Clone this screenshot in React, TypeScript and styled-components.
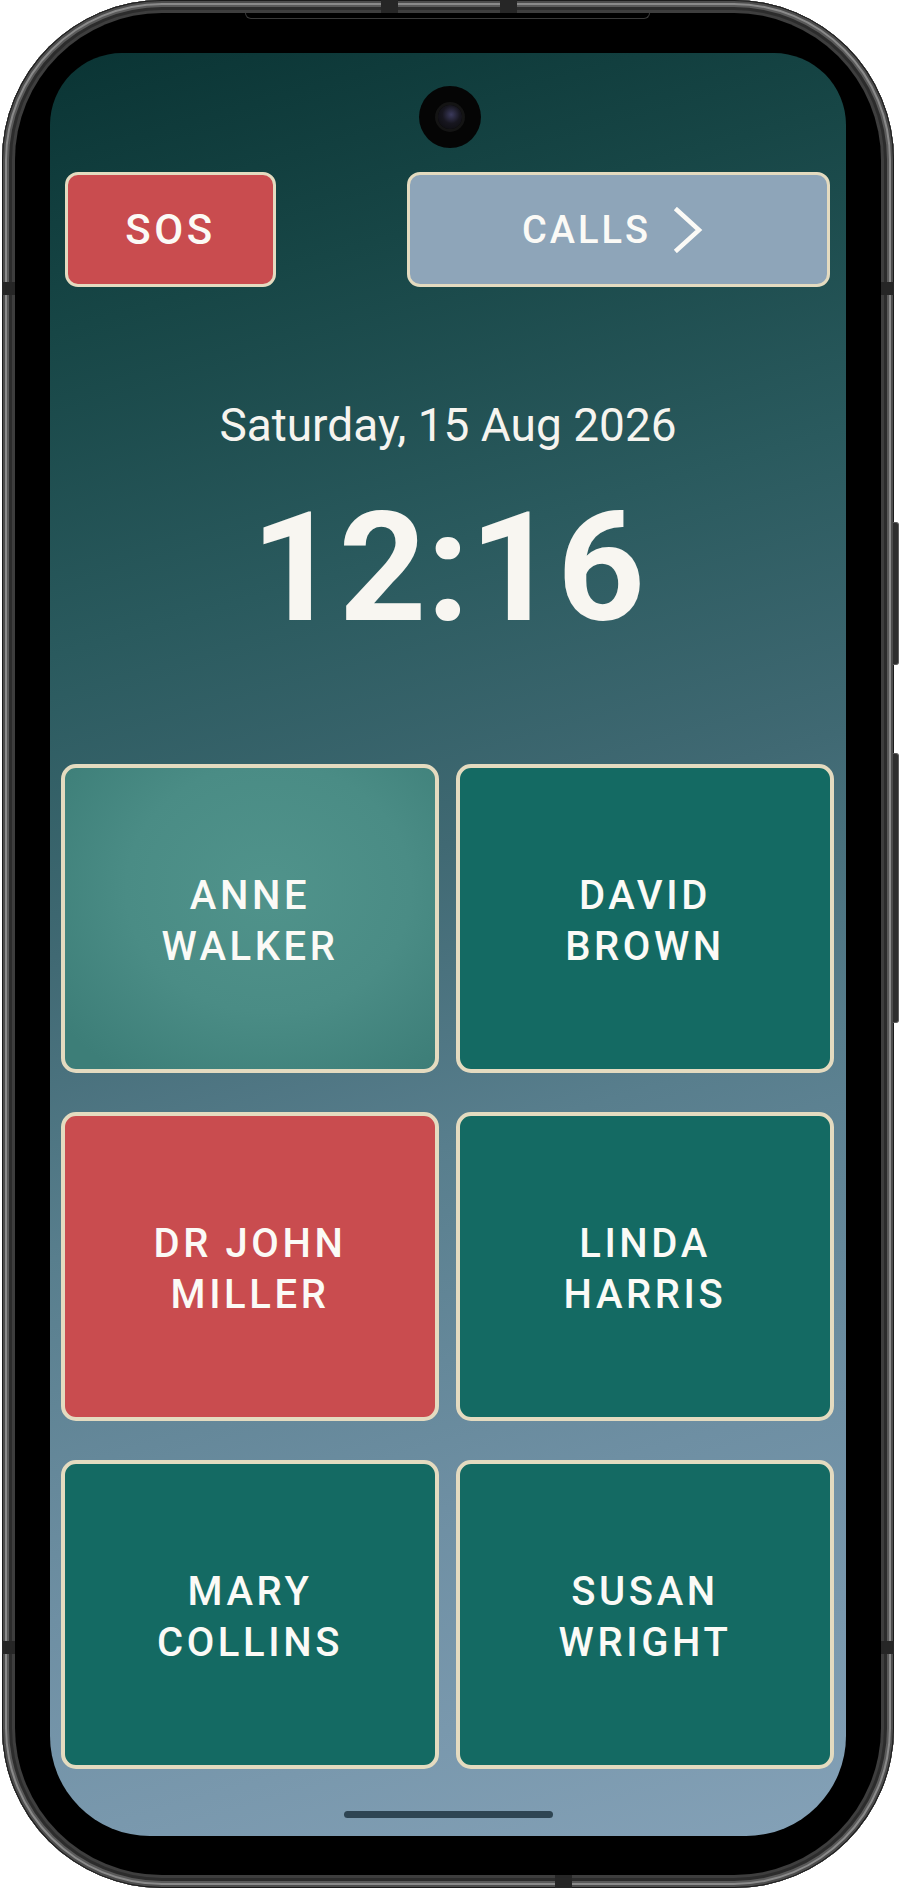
import React from "react";
import styled, { createGlobalStyle } from "styled-components";

const Global = createGlobalStyle`
  html, body { margin: 0; padding: 0; background: #ffffff; }
  body { font-family: Roboto, "Noto Sans", "Liberation Sans", sans-serif; }
  * { box-sizing: border-box; }
`;

const Stage = styled.div`
  width: 900px;
  height: 1890px;
  overflow: hidden;
  background: #ffffff;
`;

const Phone = styled.div`
  position: relative;
  margin-left: 2px;
  width: 892px;
  height: 1888px;
  padding: 13px;
  border-radius: 160px;
  background: #3a3a3a;
  box-shadow:
    inset 0 0 0 1px #1c1c1c,
    inset 0 0 0 3px #4c4c4c,
    inset 0 0 0 5px #8a8a8a,
    inset 0 0 0 7px #5a5a5a,
    inset 0 0 0 10px #2c2c2c,
    inset 0 0 0 13px #3e3e3e;
`;

const SideButton = styled.div<{ $top: number; $h: number }>`
  position: absolute;
  right: -5px;
  top: ${(p) => p.$top}px;
  width: 6px;
  height: ${(p) => p.$h}px;
  border-radius: 0 3px 3px 0;
  background: #2e2e2e;
  border: 1px solid #5c5c5c;
  border-left: none;
`;

const BandV = styled.div<{ $left: number; $bottom?: boolean }>`
  position: absolute;
  left: ${(p) => p.$left}px;
  ${(p) => (p.$bottom ? "bottom: 0;" : "top: 0;")}
  width: 17px;
  height: 13px;
  background: #262626;
`;

const BandH = styled.div<{ $top: number; $right?: boolean }>`
  position: absolute;
  top: ${(p) => p.$top}px;
  ${(p) => (p.$right ? "right: 0;" : "left: 0;")}
  width: 13px;
  height: 13px;
  background: #262626;
`;

const Bezel = styled.div`
  position: relative;
  width: 100%;
  height: 100%;
  padding: 40px 35px 39px 35px;
  border-radius: 147px;
  background: #000000;
`;

const Speaker = styled.div`
  position: absolute;
  top: 0;
  left: 230px;
  width: 405px;
  height: 6px;
  border: 1px solid #3a3a3a;
  border-top: none;
  border-radius: 0 0 8px 8px;
`;

const Screen = styled.div`
  position: relative;
  width: 100%;
  height: 100%;
  border-radius: 72px 72px 100px 100px;
  overflow: hidden;
  display: flex;
  flex-direction: column;
  align-items: center;
  padding-top: 119px;
  background: linear-gradient(
    164deg,
    #0a3434 0%,
    #174646 14%,
    #2a5a5e 30%,
    #406973 45%,
    #587e8d 60%,
    #6e8fa3 78%,
    #84a1b7 100%
  );
`;

const Camera = styled.div`
  position: absolute;
  top: 33px;
  left: 369px;
  width: 62px;
  height: 62px;
  border-radius: 50%;
  background: #050505;
  display: flex;
  align-items: center;
  justify-content: center;
`;

const Lens = styled.div`
  width: 24px;
  height: 24px;
  border-radius: 50%;
  background: radial-gradient(circle at 55% 40%, #3b3a5c 0%, #17161f 45%, #0a0a0c 100%);
  box-shadow: 0 0 0 3px #141414;
`;

const TopBar = styled.div`
  width: 100%;
  height: 115px;
  padding: 0 16px 0 15px;
  display: flex;
  justify-content: space-between;
`;

const TopButton = styled.div<{ $w: number; $bg: string; $size: number; $ls: number; $shift?: number }>`
  width: ${(p) => p.$w}px;
  height: 115px;
  border-radius: 13px;
  border: 3px solid #e4dbc0;
  background: ${(p) => p.$bg};
  display: flex;
  align-items: center;
  justify-content: center;
  gap: 22px;
  padding-right: ${(p) => p.$shift ?? 0}px;
  color: #fbfaf6;
  font-family: Roboto, "Liberation Sans", sans-serif;
  font-weight: 500;
  font-size: ${(p) => p.$size}px;
  letter-spacing: ${(p) => p.$ls}px;
`;

const DateLine = styled.div`
  margin-top: 111px;
  height: 54px;
  line-height: 54px;
  font-family: Roboto, "Liberation Sans", sans-serif;
  font-weight: 400;
  font-size: 46px;
  color: #f6f4ef;
`;

const Clock = styled.div`
  margin-top: 38px;
  height: 156px;
  line-height: 156px;
  font-family: Roboto, "Liberation Sans", sans-serif;
  font-weight: 700;
  font-size: 153px;
  color: #f8f6f1;
`;

const Grid = styled.div`
  margin-top: 118px;
  width: 100%;
  padding: 0 12px 0 11px;
  display: grid;
  grid-template-columns: 1fr 1fr;
  grid-auto-rows: 309px;
  column-gap: 17px;
  row-gap: 39px;
`;

const tileBg: Record<string, string> = {
  teal: "#146a63",
  light: "radial-gradient(ellipse 70% 75% at 55% 40%, #50938b 0%, #4a8c85 55%, #3d7e78 100%)",
  red: "#c94c4f",
};

const Tile = styled.div<{ $kind: "teal" | "light" | "red" }>`
  border-radius: 15px;
  border: 4px solid #e4dbc0;
  background: ${(p) => tileBg[p.$kind]};
  display: flex;
  align-items: center;
  justify-content: center;
  text-align: center;
  padding-top: 4px;
  color: #fbfaf6;
  font-family: Roboto, "Liberation Sans", sans-serif;
  font-weight: 500;
  font-size: 40px;
  line-height: 51px;
  letter-spacing: 3.6px;
`;

const HomeBar = styled.div`
  margin-top: 42px;
  width: 209px;
  height: 7px;
  border-radius: 4px;
  background: #2e4553;
`;

const Chevron = () => (
  <svg width="30" height="46" viewBox="0 0 30 46" fill="none">
    <path d="M4 3 L26 23 L4 43" stroke="#fbfaf6" strokeWidth="4.5" strokeLinecap="square" strokeLinejoin="miter" />
  </svg>
);

const contacts: { first: string; last: string; kind: "teal" | "light" | "red" }[] = [
  { first: "ANNE", last: "WALKER", kind: "light" },
  { first: "DAVID", last: "BROWN", kind: "teal" },
  { first: "DR JOHN", last: "MILLER", kind: "red" },
  { first: "LINDA", last: "HARRIS", kind: "teal" },
  { first: "MARY", last: "COLLINS", kind: "teal" },
  { first: "SUSAN", last: "WRIGHT", kind: "teal" },
];

export default function App() {
  return (
    <Stage>
      <Global />
      <Phone>
        <SideButton $top={522} $h={143} />
        <SideButton $top={753} $h={270} />
        <BandV $left={379} />
        <BandV $left={498} />
        <BandV $left={553} $bottom />
        <BandH $top={282} />
        <BandH $top={1641} />
        <BandH $top={282} $right />
        <BandH $top={1641} $right />
        <Bezel>
          <Speaker />
          <Screen>
            <Camera>
              <Lens />
            </Camera>
            <TopBar>
              <TopButton $w={211} $bg="#c94c4f" $size={42} $ls={3.5}>SOS</TopButton>
              <TopButton $w={423} $bg="#8ea5b9" $size={38} $ls={3} $shift={12}>
                <span>CALLS</span>
                <Chevron />
              </TopButton>
            </TopBar>
            <DateLine>Saturday, 15 Aug 2026</DateLine>
            <Clock>12:16</Clock>
            <Grid>
              {contacts.map((c) => (
                <Tile key={c.first + c.last} $kind={c.kind}>
                  {c.first}
                  <br />
                  {c.last}
                </Tile>
              ))}
            </Grid>
            <HomeBar />
          </Screen>
        </Bezel>
      </Phone>
    </Stage>
  );
}
